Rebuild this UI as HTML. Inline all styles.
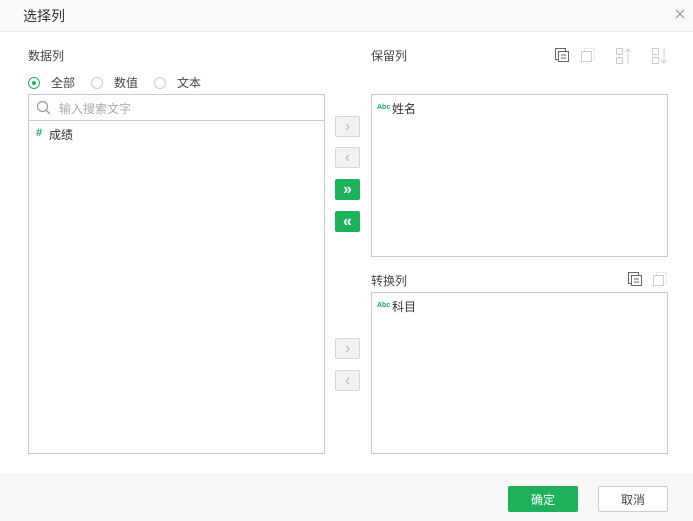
<!DOCTYPE html>
<html><head><meta charset="utf-8"><style>
*{box-sizing:border-box;margin:0;padding:0}
body{width:693px;height:521px;background:#fff;font-family:"Liberation Sans","Noto Sans CJK SC",sans-serif;font-size:12px;color:#333;position:relative;overflow:hidden}
.a{position:absolute}
.hdr{left:0;top:0;width:693px;height:32px;background:#fafafa;border-bottom:1px solid #e8e8ee}
.box{border:1px solid #c8c8c8;background:#fff}
.btn{width:25px;height:21px;border-radius:2px;display:flex;align-items:center;justify-content:center;font-size:16px;line-height:1}
.g{background:#1db15c;color:#fff;font-weight:bold}
.d{background:#f2f2f2;border:1px solid #d6d6d6;color:#bbb}
.radio{width:12px;height:12px;border:1px solid #ccc;border-radius:50%}
.lab{color:#444;font-size:12px}
.abc{color:#1db15c;font-size:7px;font-weight:bold}
</style></head><body>
<div class="a hdr"></div>
<div class="a" style="left:23px;top:6px;font-size:14px;color:#333">选择列</div>
<svg class="a" style="left:675px;top:9px" width="10" height="10"><path d="M1 1l8 8M9 1l-8 8" stroke="#888" stroke-width="1"/></svg>

<div class="a lab" style="left:28px;top:47px">数据列</div>
<div class="a radio" style="left:28px;top:77px;border-color:#1db15c"></div>
<div class="a" style="left:32px;top:81px;width:4px;height:4px;border-radius:50%;background:#1db15c"></div>
<div class="a lab" style="left:51px;top:74px">全部</div>
<div class="a radio" style="left:91px;top:77px"></div>
<div class="a lab" style="left:114px;top:74px">数值</div>
<div class="a radio" style="left:154px;top:77px"></div>
<div class="a lab" style="left:177px;top:74px">文本</div>

<div class="a box" style="left:28px;top:94px;width:297px;height:360px"></div>
<div class="a" style="left:29px;top:120px;width:295px;height:1px;background:#c8c8c8"></div>
<svg class="a" style="left:36px;top:100px" width="16" height="16"><circle cx="6.5" cy="6.5" r="5" fill="none" stroke="#999" stroke-width="1.2"/><path d="M10 10l4 4" stroke="#999" stroke-width="1.3"/></svg>
<div class="a" style="left:59px;top:100px;color:#aaa">输入搜索文字</div>
<div class="a" style="left:36px;top:127px;color:#1db15c;font-weight:bold;font-size:11px">#</div>
<div class="a" style="left:49px;top:126px">成绩</div>

<div class="a btn d" style="left:335px;top:116px">›</div>
<div class="a btn d" style="left:335px;top:147px">‹</div>
<div class="a btn g" style="left:335px;top:179px">»</div>
<div class="a btn g" style="left:335px;top:211px">«</div>
<div class="a btn d" style="left:335px;top:338px">›</div>
<div class="a btn d" style="left:335px;top:370px">‹</div>

<div class="a lab" style="left:371px;top:47px">保留列</div>
<svg class="a" style="left:554px;top:47px" width="16" height="16"><rect x="1.5" y="1.5" width="10" height="11" fill="none" stroke="#666"/><rect x="4.5" y="4.5" width="10" height="10" fill="#fff" stroke="#666"/><path d="M7 8h5M7 11h5" stroke="#666"/></svg>
<svg class="a" style="left:580px;top:47px" width="16" height="16"><rect x="4.5" y="1.5" width="10" height="11" fill="none" stroke="#ddd" stroke-dasharray="2 1"/><rect x="1.5" y="4.5" width="10" height="10" fill="#fff" stroke="#ccc"/></svg>
<svg class="a" style="left:615px;top:47px" width="18" height="18"><rect x="1.5" y="1.5" width="6" height="6" fill="none" stroke="#ccc"/><rect x="1.5" y="10.5" width="6" height="6" fill="none" stroke="#ccc"/><path d="M13 17V2M10 5l3-3 3 3" fill="none" stroke="#ccc"/></svg>
<svg class="a" style="left:651px;top:47px" width="18" height="18"><rect x="1.5" y="1.5" width="6" height="6" fill="none" stroke="#ccc"/><rect x="1.5" y="10.5" width="6" height="6" fill="none" stroke="#ccc"/><path d="M13 1v15M10 13l3 3 3-3" fill="none" stroke="#ccc"/></svg>
<div class="a box" style="left:371px;top:94px;width:297px;height:163px"></div>
<div class="a abc" style="left:377px;top:104px">Abc</div>
<div class="a" style="left:392px;top:100px">姓名</div>

<div class="a lab" style="left:371px;top:272px">转换列</div>
<svg class="a" style="left:627px;top:271px" width="16" height="16"><rect x="1.5" y="1.5" width="10" height="11" fill="none" stroke="#666"/><rect x="4.5" y="4.5" width="10" height="10" fill="#fff" stroke="#666"/><path d="M7 8h5M7 11h5" stroke="#666"/></svg>
<svg class="a" style="left:652px;top:271px" width="16" height="16"><rect x="4.5" y="1.5" width="10" height="11" fill="none" stroke="#ddd" stroke-dasharray="2 1"/><rect x="1.5" y="4.5" width="10" height="10" fill="#fff" stroke="#ccc"/></svg>
<div class="a box" style="left:371px;top:292px;width:297px;height:162px"></div>
<div class="a abc" style="left:377px;top:302px">Abc</div>
<div class="a" style="left:392px;top:298px">科目</div>

<div class="a" style="left:0;top:473px;width:693px;height:48px;background:#f7f7f7"></div>
<div class="a" style="left:508px;top:486px;width:70px;height:26px;background:#1db15c;border-radius:2px;color:#fff;display:flex;align-items:center;justify-content:center">确定</div>
<div class="a" style="left:598px;top:486px;width:70px;height:26px;background:#fff;border:1px solid #ccc;border-radius:2px;color:#444;display:flex;align-items:center;justify-content:center">取消</div>
</body></html>
